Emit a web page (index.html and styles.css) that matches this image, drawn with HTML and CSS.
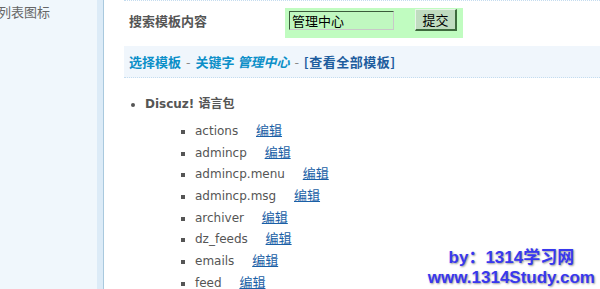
FILE: index.html
```html
<!DOCTYPE html>
<html lang="zh-CN">
<head>
    <meta charset="UTF-8">
    <title>模板编辑</title>
    <link rel="stylesheet" href="styles.css">
</head>
<body>
    <div class="page">
        <div class="sidebar">
            <div class="side-item">列表图标</div>
        </div>
        <div class="sidebar-edge"></div>

        <div class="main">
            <form class="search-row">
                <span class="search-label">搜索模板内容</span>
                <div class="search-box">
                    <input type="text" class="search-input" value="管理中心">
                    <button type="submit" class="search-btn">提交</button>
                </div>
            </form>

            <div class="crumb">
                <a href="#" class="crumb-link">选择模板</a>
                <span class="sep">-</span>
                <span class="crumb-link">关键字</span>
                <em class="keyword">管理中心</em>
                <span class="sep">-</span>
                <a href="#" class="crumb-all">[查看全部模板]</a>
            </div>

            <ul class="tpl-list">
                <li>
                    <b>Discuz! 语言包</b>
                    <ul class="files">
                        <li>actions <a href="#">编辑</a></li>
                        <li>admincp <a href="#">编辑</a></li>
                        <li>admincp.menu <a href="#">编辑</a></li>
                        <li>admincp.msg <a href="#">编辑</a></li>
                        <li>archiver <a href="#">编辑</a></li>
                        <li>dz_feeds <a href="#">编辑</a></li>
                        <li>emails <a href="#">编辑</a></li>
                        <li>feed <a href="#">编辑</a></li>
                    </ul>
                </li>
            </ul>

            <div class="watermark">
                <div>by：1314学习网</div>
                <div>www.1314Study.com</div>
            </div>
        </div>
    </div>
</body>
</html>
```

FILE: styles.css
```css
body {
    margin: 0;
    font-family: "DejaVu Sans", "Noto Sans CJK SC", sans-serif;
    font-size: 12px;
    color: #555;
    background-color: white;
    overflow: hidden;
}
.page {
    display: flex;
    height: 289px;
    overflow: hidden;
}
.sidebar {
    width: 97px;
    background-color: #f0f7fc;
    overflow: hidden;
}
.side-item {
    font-family: "Noto Sans CJK SC", sans-serif;
    font-size: 13px;
    color: #666;
    line-height: 18px;
    padding-top: 3px;
    text-indent: -2px;
}
.sidebar-edge {
    width: 6px;
    background-color: #dcebf7;
    border-right: 1px solid #a9c9de;
}
.main {
    flex: 1;
    padding-left: 20px;
    position: relative;
}
.search-row {
    display: flex;
    align-items: flex-start;
    height: 45px;
    margin: 0;
    border-top: 1px dotted #c4dcef;
}
.search-label {
    font-family: "Noto Sans CJK SC", sans-serif;
    font-weight: bold;
    font-size: 13px;
    color: #555;
    width: 156px;
    padding-left: 5px;
    margin-top: 11px;
    line-height: 18px;
}
.search-box {
    display: flex;
    align-items: flex-start;
    width: 178px;
    height: 30px;
    margin-top: 7px;
    background-color: #c0fcc0;
    box-sizing: border-box;
    padding: 3px 0 0 4px;
}
.search-input {
    width: 105px;
    height: 19px;
    box-sizing: border-box;
    padding: 0 2px;
    font-family: "Noto Sans CJK SC", sans-serif;
    font-size: 13px;
    color: #000;
    background-color: #c0f8c0;
    border: 1px solid;
    border-color: #3b5b3b #c8c8c8 #c8c8c8 #3b5b3b;
    outline: none;
}
.search-btn {
    width: 42px;
    height: 22px;
    margin: -2px 0 0 21px;
    padding: 0;
    font-family: "Noto Sans CJK SC", sans-serif;
    font-size: 13px;
    color: #000;
    background-color: #c0dcc0;
    border: 1px solid;
    border-color: #e8f4e8 #3d6a3d #3d6a3d #e8f4e8;
    border-width: 1px 2px 2px 1px;
}
.crumb {
    height: 31px;
    line-height: 31px;
    padding-left: 5px;
    background-color: #f0f6fc;
    border-bottom: 1px dotted #c4dcef;
    font-family: "Noto Sans CJK SC", sans-serif;
    font-weight: bold;
    font-size: 13px;
}
.crumb-link {
    color: #0b8fc8;
    text-decoration: none;
}
.sep {
    color: #888;
    font-weight: normal;
    margin: 0 2px;
}
.keyword {
    color: #0b8fc8;
    font-style: italic;
}
.crumb-all {
    color: #1e5d9e;
    text-decoration: none;
    letter-spacing: 0.5px;
}
.tpl-list {
    margin: 16px 0 0 0;
    padding-left: 21px;
    line-height: 20px;
}
.tpl-list b {
    font-weight: bold;
    color: #555;
}
.files {
    list-style: square;
    margin: 7px 0 0 0;
    padding-left: 50px;
}
.files li {
    height: 21.7px;
    line-height: 21.7px;
}
.files a {
    margin-left: 14px;
    color: #1a5fa6;
    font-family: "Noto Sans CJK SC", sans-serif;
    font-size: 13px;
    line-height: 14px;
}
.watermark {
    position: absolute;
    right: 5px;
    bottom: 1px;
    font-family: "Liberation Sans", Arial, "Noto Sans CJK SC", sans-serif;
    font-weight: bold;
    font-size: 17px;
    line-height: 20px;
    color: #3838ee;
    text-align: center;
    text-shadow: 1px 1px 2px #999;
}
```
